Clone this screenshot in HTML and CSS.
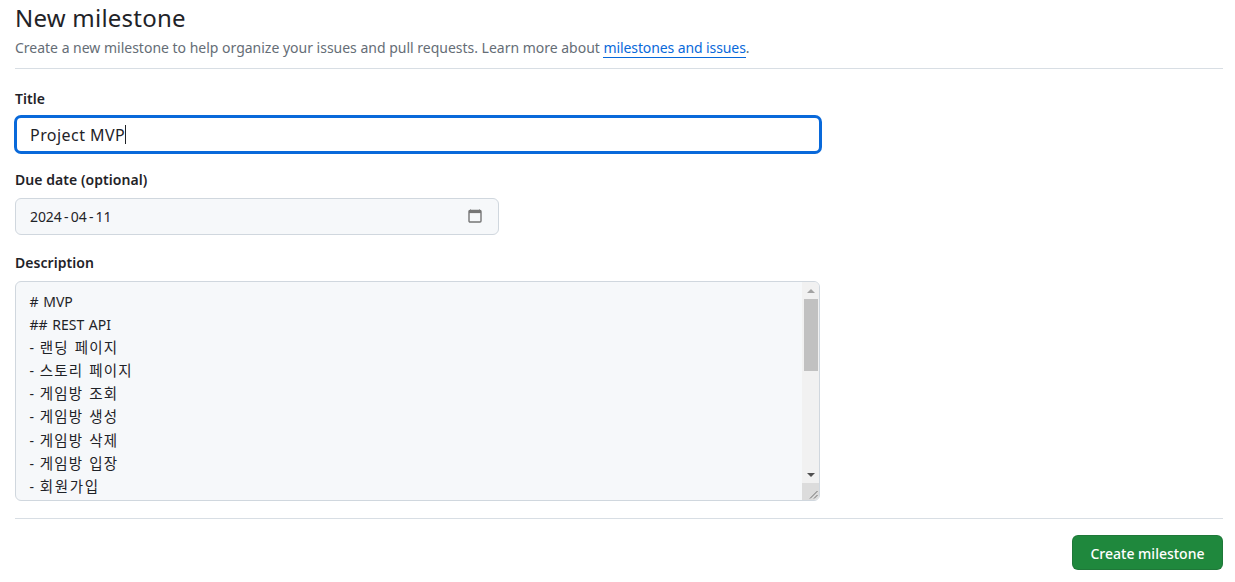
FILE: index.html
```html
<!DOCTYPE html>
<html lang="en">
<head>
<meta charset="utf-8">
<title>New milestone</title>
<link rel="stylesheet" href="styles.css">
</head>
<body>
<main class="page">
  <header class="head">
    <h1 class="head-title">New milestone</h1>
    <p class="head-sub">Create a new milestone to help organize your issues and pull requests. Learn more about <a class="link" href="#">milestones and issues</a>.</p>
  </header>
  <form class="form">
    <div class="field">
      <label class="label" for="title">Title</label>
      <div class="title-wrap">
        <input class="control title-input" id="title" type="text" value="Project MVP">
        <span class="caret"></span>
      </div>
    </div>
    <div class="field">
      <label class="label" for="due">Due date (optional)</label>
      <div class="date-wrap">
        <input class="control date-input" id="due" type="text" value="2024 - 04 - 11">
        <svg class="cal" width="16" height="16" viewBox="0 0 16 16" aria-hidden="true"><path d="M3.5 1.5v2M12.5 1.5v2" stroke="#767676" stroke-width="1" fill="none"/><rect x="2" y="2.5" width="12" height="11.5" rx="1" fill="none" stroke="#767676" stroke-width="1.4"/><rect x="2" y="2.5" width="12" height="2.6" fill="#767676"/></svg>
      </div>
    </div>
    <div class="field">
      <span class="label">Description</span>
      <div class="desc-wrap">
        <div class="control desc-input" role="textbox" aria-multiline="true" aria-label="Description">
          <div class="line"># MVP</div>
          <div class="line">## REST API</div>
          <div class="line">- <span class="ko">랜딩 페이지</span></div>
          <div class="line">- <span class="ko">스토리 페이지</span></div>
          <div class="line">- <span class="ko">게임방 조회</span></div>
          <div class="line">- <span class="ko">게임방 생성</span></div>
          <div class="line">- <span class="ko">게임방 삭제</span></div>
          <div class="line">- <span class="ko">게임방 입장</span></div>
          <div class="line">- <span class="ko ko-wide">회원가입</span></div>
        </div>
        <div class="scroll" aria-hidden="true">
          <div class="arrow-box"><span class="arrow-up"></span></div>
          <div class="track"><div class="thumb"></div></div>
          <div class="arrow-box"><span class="arrow-down"></span></div>
          <div class="grip">
            <svg width="17" height="17" viewBox="0 0 17 17"><path d="M8 15.5L15.5 8M12 15.5L15.5 12" stroke="#6f6f6f" stroke-width="1" fill="none"/></svg>
          </div>
        </div>
      </div>
    </div>
    <div class="actions">
      <button class="btn" type="button">Create milestone</button>
    </div>
  </form>
</main>
</body>
</html>
```
FILE: styles.css
```css
* { box-sizing: border-box; }
html, body { margin: 0; padding: 0; background: #fff; overflow: hidden; }
body {
  font-family: "Noto Sans", "Noto Sans CJK KR", "Open Sans", sans-serif;
  color: #1f2328;
  font-size: 14px;
  height: 582px;
}
.page { padding: 0 12px 0 15px; }
.head {
  height: 69px;
  border-bottom: 1px solid #d8dee4;
}
.head-title {
  margin: 0;
  padding-top: 1px;
  font-size: 24px;
  font-weight: 400;
  line-height: 33px;
  letter-spacing: 0.23px;
}
.head-sub {
  margin: 3px 0 0;
  font-size: 14px;
  line-height: 21px;
  color: #656d76;
  letter-spacing: -0.008px;
}
.link {
  color: #0969da;
  text-decoration: none;
  border-bottom: 1px solid #0969da;
  letter-spacing: -0.1px;
}
.form { display: flex; flex-direction: column; }
.field { display: flex; flex-direction: column; }
.label {
  font-weight: 600;
  font-size: 14px;
  line-height: 20px;
  letter-spacing: 0.05px;
  margin-bottom: 8px;
}
.field:nth-child(1) { padding-top: 20px; }
.field:nth-child(2) { padding-top: 17px; }
.field:nth-child(3) { padding-top: 18px; }
.control {
  font-family: "Noto Sans", "Noto Sans CJK KR", sans-serif;
  color: #1f2328;
  border: 1px solid #d0d7de;
  border-radius: 6px;
  background: #f6f8fa;
  outline: none;
}
.title-wrap { position: relative; width: 806px; margin-top: -1px; }
.title-input {
  display: block;
  width: 100%;
  height: 37px;
  padding: 0 13px;
  font-size: 16px;
  background: #fff;
  border: 2px solid #0969da;
  box-shadow: 0 0 0 1px #0969da;
  border-radius: 6px;
  letter-spacing: 0.45px;
}
.caret {
  position: absolute;
  left: 110px;
  top: 9px;
  width: 1px;
  height: 19px;
  background: #1f2328;
}
.date-wrap {
  display: flex;
  align-items: center;
  position: relative;
  width: 484px;
}
.date-input {
  display: block;
  width: 100%;
  height: 37px;
  padding: 0 14px;
  font-size: 14px;
  letter-spacing: -0.1px;
  word-spacing: -1.2px;
}
.cal {
  position: absolute;
  right: 16px;
  top: 10px;
}
.desc-wrap {
  position: relative;
  width: 805px;
  height: 220px;
}
.desc-input {
  width: 100%;
  height: 100%;
  padding: 8px 30px 8px 13.5px;
  font-size: 14px;
  overflow: hidden;
}
.line {
  height: 23.1px;
  line-height: 23.1px;
  word-spacing: 1px;
  white-space: nowrap;
}
.ko {
  font-size: 14.5px;
  letter-spacing: 1.2px;
  margin-left: 1px;
}
.ko-wide { letter-spacing: 1.7px; }
.scroll {
  position: absolute;
  top: 1px;
  right: 1px;
  bottom: 1px;
  width: 17px;
  display: flex;
  flex-direction: column;
  background: #f1f1f1;
  border-top-right-radius: 5px;
  border-bottom-right-radius: 5px;
  overflow: hidden;
}
.arrow-box {
  height: 17px;
  display: flex;
  align-items: center;
  justify-content: center;
  flex: none;
}
.arrow-up {
  width: 0; height: 0;
  border-left: 4px solid transparent;
  border-right: 4px solid transparent;
  border-bottom: 4px solid #a3a3a3;
}
.arrow-down {
  width: 0; height: 0;
  border-left: 4px solid transparent;
  border-right: 4px solid transparent;
  border-top: 4px solid #505050;
}
.track { flex: 1; padding: 0 1px 0 2px; }
.thumb { height: 72px; background: #c1c1c1; }
.grip {
  height: 17px;
  flex: none;
  background: #dcdcdc;
  display: flex;
}
.actions {
  margin-top: 17px;
  padding-top: 16px;
  border-top: 1px solid #d8dee4;
  display: flex;
  justify-content: flex-end;
}
.btn {
  width: 151px;
  height: 35px;
  padding-top: 2px;
  font-family: "Noto Sans", sans-serif;
  font-size: 14px;
  font-weight: 500;
  color: #fff;
  background: #1f883d;
  border: 1px solid rgba(31,35,40,0.15);
  border-radius: 6px;
}
```
